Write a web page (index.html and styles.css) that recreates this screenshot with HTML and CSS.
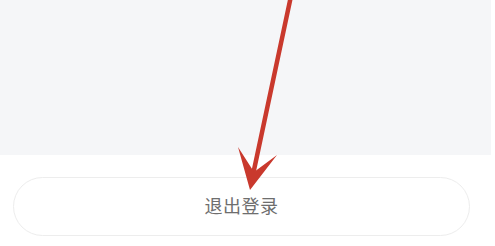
FILE: index.html
```html
<!DOCTYPE html>
<html lang="zh-CN">
<head>
    <meta charset="UTF-8">
    <meta name="viewport" content="width=device-width, initial-scale=1.0">
    <title>退出登录</title>
    <link rel="stylesheet" href="styles.css">
</head>
<body>
    <div id="page">
        <div class="settings-area"></div>
        <div class="footer">
            <button class="logout">退出登录</button>
        </div>
        <!-- annotation arrow drawn over the page -->
        <svg class="arrow" width="495" height="246" viewBox="0 0 495 246">
            <line x1="291" y1="-4" x2="254" y2="170" stroke="#c9392d" stroke-width="4.5" stroke-linecap="round"/>
            <path d="M238 147 L254 172 L277 155 L250 190 Z" fill="#c9392d"/>
        </svg>
    </div>
</body>
</html>
```

FILE: styles.css
```css
/* General Styles */
body {
    margin: 0;
    padding: 0;
    background-color: #fff;
    font-family: 'Noto Sans CJK SC', 'Noto Sans', sans-serif;
}
#page {
    position: relative;
    width: 495px;
    height: 246px;
    overflow: hidden;
    display: flex;
    flex-direction: column;
}
.settings-area {
    height: 155px;
    margin-right: 4px;
    background-color: #f5f6f8;
}
.footer {
    padding: 22px 25px 0 13px;
}
.logout {
    width: 100%;
    height: 59px;
    background: #fff;
    border: 1px solid #ededed;
    border-radius: 30px;
    font-family: inherit;
    font-size: 18px;
    color: #6e6e6e;
    letter-spacing: 0.5px;
    padding: 0 0 4px;
}
.arrow {
    position: absolute;
    left: 0;
    top: 0;
}
```
